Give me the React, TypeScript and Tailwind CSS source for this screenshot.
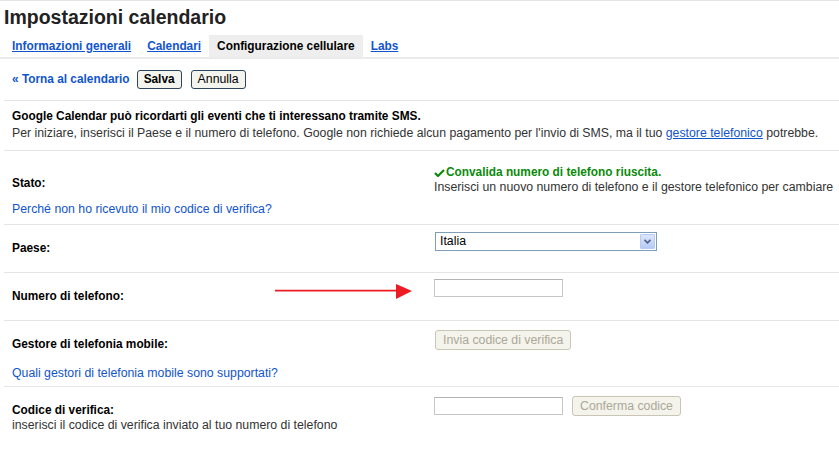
import React, { ReactElement, ReactNode } from 'react'

const linkCls = 'text-[#1155cc]'

interface SectionProps {
  className?: string
  children: ReactNode
}
function Section({ className, children }: SectionProps): ReactElement {
  return (
    <div
      className={`relative grid grid-cols-[430px_1fr] border-t border-[#e5e5e5] ${className}`}
    >
      {children}
    </div>
  )
}

function Label({ children }: { children: ReactNode }): ReactElement {
  return <div className="text-[11.85px] font-bold text-black">{children}</div>
}

function TextInput(): ReactElement {
  return (
    <div className="h-[18px] w-[129px] border border-[#c6c6c6] border-t-[#b4b4b4] bg-white" />
  )
}

function DisabledButton({ children }: { children: ReactNode }): ReactElement {
  return (
    <div className="flex h-[20px] items-center rounded-[3px] border border-[#c9c6b6] bg-[#f4f3ec] px-[7px] text-[12.3px] text-[#aca899]">
      {children}
    </div>
  )
}

function Check(): ReactElement {
  return (
    <svg width="11" height="8" viewBox="0 0 11 8" className="mr-px">
      <path
        d="M1 4 L4 7 L10 1"
        fill="none"
        stroke="#0a8a0a"
        strokeWidth="2.2"
      />
    </svg>
  )
}

function Tab({
  label,
  active,
}: {
  label: string
  active?: boolean
}): ReactElement {
  if (active) {
    return (
      <div className="flex h-full items-center bg-[#eeeeee] px-2 text-black">
        {label}
      </div>
    )
  }
  return (
    <div className="flex h-full items-center px-2">
      <span className={`${linkCls} underline`}>{label}</span>
    </div>
  )
}

export default function App(): ReactElement {
  return (
    <div className="h-[452px] w-[839px] overflow-hidden border-t border-[#e5e5e5] bg-white font-['Liberation_Sans',Arial,sans-serif] leading-[15px] text-[#333]">
      <div className="pl-[4px] pt-[4px] text-[19.5px] leading-[24px] font-bold text-[#222]">
        Impostazioni calendario
      </div>

      <div className="mt-[6px] flex h-[24px] border-b-2 border-[#ebebeb] pl-[4px] text-[11.85px] font-bold">
        <Tab label="Informazioni generali" />
        <Tab label="Calendari" />
        <Tab label="Configurazione cellulare" active />
        <Tab label="Labs" />
      </div>

      <div className="flex h-[41px] items-center pl-[12px]">
        <span className={`${linkCls} text-[11.85px] font-bold`}>
          « Torna al calendario
        </span>
        <div className="ml-[7px] flex h-[19px] w-[45px] items-center justify-center rounded-[3px] border border-[#2c445c] bg-[#f4f4ef] text-[11.85px] font-bold text-black">
          Salva
        </div>
        <div className="ml-[9px] flex h-[19px] w-[55px] items-center justify-center rounded-[3px] border border-[#2c445c] bg-[#f4f4ef] text-[12.3px] text-black">
          Annulla
        </div>
      </div>

      <div className="ml-[4px]">
        <div className="h-[50px] border-t border-[#e5e5e5] pl-[8px] pt-[7px] leading-[17px]">
          <div className="text-[11.85px] font-bold text-black">
            Google Calendar può ricordarti gli eventi che ti interessano
            tramite SMS.
          </div>
          <div className="whitespace-nowrap text-[12.3px]">
            Per iniziare, inserisci il Paese e il numero di telefono. Google
            non richiede alcun pagamento per l'invio di SMS, ma il tuo{' '}
            <span className={`${linkCls} underline`}>gestore telefonico</span>{' '}
            potrebbe.
          </div>
        </div>

        <Section className="h-[74px]">
          <div className="pl-[8px] pt-[25px]">
            <Label>Stato:</Label>
            <div className={`${linkCls} mt-[11px] text-[12.3px]`}>
              Perché non ho ricevuto il mio codice di verifica?
            </div>
          </div>
          <div className="pt-[14px]">
            <div className="flex items-center text-[11.85px] font-bold text-[#0a8a0a]">
              <Check />
              Convalida numero di telefono riuscita.
            </div>
            <div className="whitespace-nowrap text-[12.3px]">
              Inserisci un nuovo numero di telefono e il gestore telefonico per
              cambiare
            </div>
          </div>
        </Section>

        <Section className="h-[48px]">
          <div className="pl-[8px] pt-[16px]">
            <Label>Paese:</Label>
          </div>
          <div className="pt-[7px]">
            <div className="ml-px flex h-[19px] w-[222px] items-center justify-between border border-[#7f9db9] bg-white pl-[4px] pr-px text-[12.3px] text-black">
              Italia
              <div className="flex h-[15px] w-[15px] items-center justify-center rounded-[1px] border border-[#b9cbf3] bg-gradient-to-b from-[#dbe5fd] to-[#b7caf7]">
                <svg width="7" height="5" viewBox="0 0 7 5">
                  <path
                    d="M0.5 0.8 L3.5 3.8 L6.5 0.8"
                    fill="none"
                    stroke="#4d6185"
                    strokeWidth="1.6"
                  />
                </svg>
              </div>
            </div>
          </div>
        </Section>

        <Section className="h-[48px]">
          <div className="pl-[8px] pt-[16px]">
            <Label>Numero di telefono:</Label>
          </div>
          <div className="pt-[6px]">
            <TextInput />
          </div>
          <svg
            width="137"
            height="17"
            viewBox="0 0 137 17"
            className="absolute left-[271px] top-[10px]"
          >
            <path d="M0 7.7 L122 7.7" stroke="#ed1c24" strokeWidth="1.8" />
            <polygon points="121,1 137,8 121,16" fill="#ed1c24" />
          </svg>
        </Section>

        <Section className="h-[66px]">
          <div className="pl-[8px] pt-[16px]">
            <Label>Gestore di telefonia mobile:</Label>
            <div className={`${linkCls} mt-[14px] text-[12.3px]`}>
              Quali gestori di telefonia mobile sono supportati?
            </div>
          </div>
          <div className="flex items-start pl-px pt-[9px]">
            <DisabledButton>Invia codice di verifica</DisabledButton>
          </div>
        </Section>

        <Section className="h-[70px]">
          <div className="pl-[8px] pt-[16px]">
            <Label>Codice di verifica:</Label>
            <div className="text-[12.3px]">
              inserisci il codice di verifica inviato al tuo numero di telefono
            </div>
          </div>
          <div className="flex items-start pt-[9px]">
            <div className="mt-px">
              <TextInput />
            </div>
            <div className="ml-[9px]">
              <DisabledButton>Conferma codice</DisabledButton>
            </div>
          </div>
        </Section>
      </div>
    </div>
  )
}
